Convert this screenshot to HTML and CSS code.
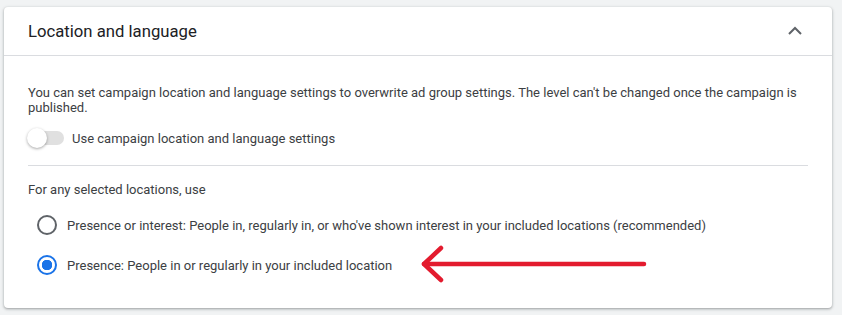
FILE: index.html
```html
<!DOCTYPE html>
<html>
<head>
    <title>Location and language</title>
    <meta charset="utf-8">
    <link rel="stylesheet" href="styles.css">
</head>
<body>
    <div class="card">
        <div class="card-header">
            <span class="card-title">Location and language</span>
            <svg class="chevron" width="24" height="24" viewBox="0 0 24 24">
                <path d="M6 15l6-6 6 6" fill="none" stroke="#5f6368" stroke-width="2"/>
            </svg>
        </div>

        <div class="card-body">
            <p class="note">You can set campaign location and language settings to overwrite ad group settings. The level can't be changed once the campaign is published.</p>

            <div class="toggle-row">
                <span class="toggle"><span class="knob"></span></span>
                <span>Use campaign location and language settings</span>
            </div>

            <div class="divider"></div>

            <p class="label">For any selected locations, use</p>

            <div class="radio-row">
                <span class="radio"></span>
                <span>Presence or interest: People in, regularly in, or who've shown interest in your included locations (recommended)</span>
            </div>
            <div class="radio-row">
                <span class="radio checked"></span>
                <span>Presence: People in or regularly in your included location</span>
                <svg class="arrow" width="230" height="40" viewBox="0 0 230 40">
                    <path d="M4 19H224" stroke="#e31b2e" stroke-width="4.5" stroke-linecap="round"/>
                    <path d="M21 3L4 19l17 16" fill="none" stroke="#e31b2e" stroke-width="4.5" stroke-linecap="round" stroke-linejoin="round"/>
                </svg>
            </div>
        </div>
    </div>
</body>
</html>
```

FILE: styles.css
```css
body {
    margin: 0;
    padding: 7px 10px 7px 4px;
    background-color: #f1f3f4;
    font-family: Roboto, "Liberation Sans", sans-serif;
    color: #3c4043;
}
.card {
    background-color: #fff;
    border-radius: 4px;
    box-shadow: 0 1px 2px rgba(60, 64, 67, 0.3), 0 1px 3px 1px rgba(60, 64, 67, 0.15);
}
.card-header {
    height: 48px;
    display: flex;
    align-items: center;
    justify-content: space-between;
    padding: 0 25px 0 24px;
    border-bottom: 1px solid #dadce0;
}
.card-title {
    font-size: 16.7px;
    color: #202124;
}
.chevron {
    display: block;
}
.card-body {
    padding: 29px 24px 23px 24px;
    font-size: 13px;
    line-height: 15px;
}
.note {
    margin: 0;
}
.toggle-row {
    display: flex;
    align-items: center;
    height: 20px;
    margin-top: 13px;
}
.toggle {
    position: relative;
    width: 36px;
    height: 14px;
    border-radius: 7px;
    background-color: #e0e0e0;
    margin-right: 8px;
}
.knob {
    position: absolute;
    left: -1px;
    top: -3px;
    width: 20px;
    height: 20px;
    border-radius: 50%;
    background-color: #fff;
    box-shadow: 0 1px 3px rgba(0, 0, 0, 0.35);
}
.divider {
    height: 1px;
    background-color: #dadce0;
    margin: 17px 0 16px;
}
.label {
    margin: 0 0 8px;
}
.radio-row {
    position: relative;
    display: flex;
    align-items: center;
    height: 40px;
}
.radio {
    box-sizing: border-box;
    width: 20px;
    height: 20px;
    margin: 0 10px 0 9px;
    border: 2px solid #5f6368;
    border-radius: 50%;
}
.radio.checked {
    border-color: #1a73e8;
    background: radial-gradient(circle, #1a73e8 0 5px, #fff 5.5px);
}
.arrow {
    position: absolute;
    left: 392px;
    top: 0;
}
```
